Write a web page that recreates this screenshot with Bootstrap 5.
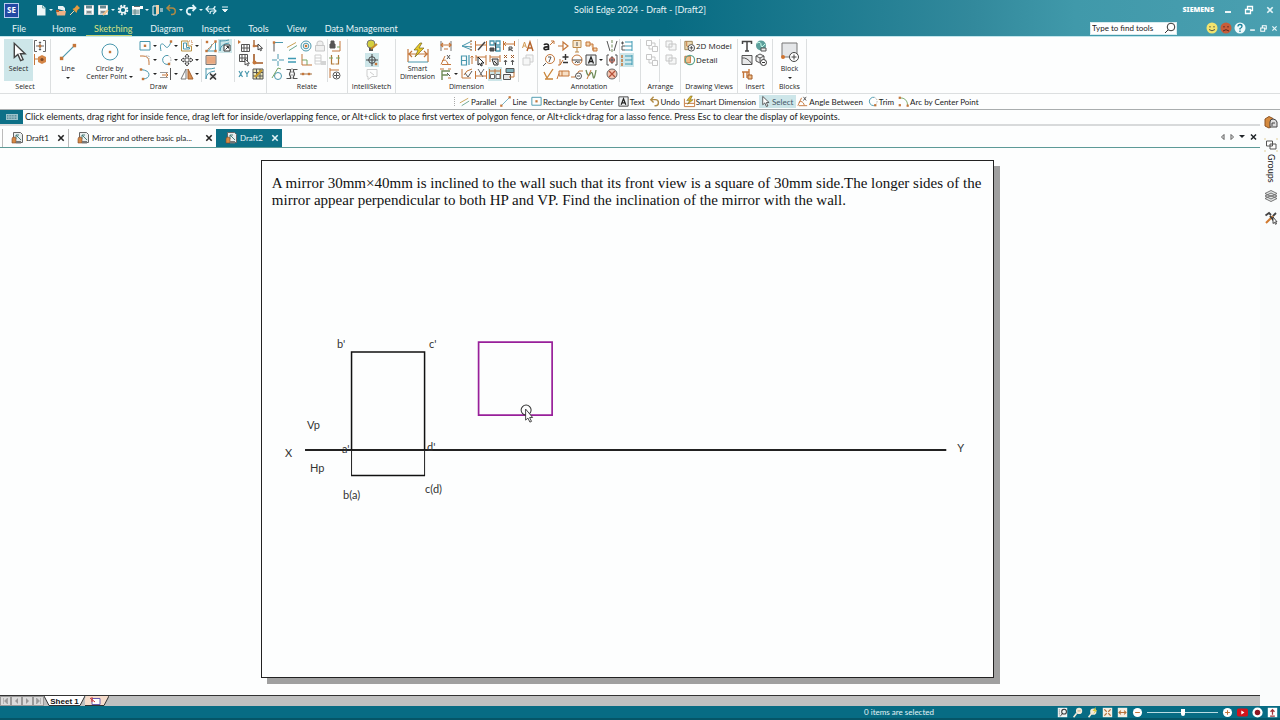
<!DOCTYPE html>
<html lang="en">
<head>
<meta charset="utf-8">
<meta name="viewport" content="width=device-width, initial-scale=1">
<title>Solid Edge 2024 - Draft - [Draft2]</title>
<link href="https://cdn.jsdelivr.net/npm/bootstrap@5.3.0/dist/css/bootstrap.min.css" rel="stylesheet">
<style>
:root{--teal:#076c84;--hi:#cde6e9;--rule:#dcdfe0}
body{font-family:Lato,"Noto Sans",sans-serif;font-size:9px;line-height:12px;color:#222;background:#fdfefe;overflow:hidden}
button{border:0;background:none;padding:0;color:inherit;font:inherit;line-height:inherit}
svg{display:block;flex:none}
.ic{width:14px;height:14px}
.defs{display:none}
.caret{width:0;height:0;border:2px solid transparent;border-top-color:currentColor;border-bottom:0;flex:none}
/* header */
.app-head{height:37px;background:linear-gradient(90deg,#076b82 0,#076b82 52%,#32899c 76%,#4099aa 84%,#4a9fb0 100%);color:#e4f4f7;border-bottom:1px solid #c2e6ec}
.title-row{height:20px;display:grid;grid-template-columns:1fr auto 1fr}
.se-logo{width:15px;height:15px;background:#2349a4;border:1px solid #b9cdf0;color:#fff;font:bold 8px/12px "Noto Sans",sans-serif}
.qat{padding-left:15px}
.qat button{display:flex;align-items:center;height:14px}
.qat .caret{margin:0 1px}
.winctl{padding-right:3px}
.winctl button{margin-left:7px}
.brand{font:900 7px/12px "Noto Sans",sans-serif;color:#fff}
.menu-row{height:16px}
.menu-row .nav{gap:18px;padding-left:12px}
.menu-row a{color:#e4f4f7;text-decoration:none;line-height:14px;padding-top:2px}
.menu-row a.on{color:#d9e284;box-shadow:inset 0 -1px #c3d072;margin-left:-8px;padding-left:8px}
.finder{width:87px;height:13px;background:#fff;border:1px solid #d9ebef}
.finder input{border:0;outline:0;width:72px;padding:0 1px;font-size:8px;height:11px;color:#222;background:none}
.finder input::placeholder{color:#222;opacity:1}
.helpers{padding-left:28px}
.helpers .doc .ic{width:11px;height:11px}
/* ribbon */
.ribbon{height:57px;padding-top:2px;border-bottom:1px solid var(--rule);font:7px/8px "Open Sans","Noto Sans",sans-serif;color:#222}
.rgroup{border-right:1px solid var(--rule);height:54px}
.rgroup>.body{height:43px}
.rgroup>.cap{line-height:10px;text-align:center;white-space:nowrap}
.tools{display:grid;grid-template-rows:repeat(3,14px);grid-auto-flow:column;grid-auto-columns:14px;align-content:start}
.tools.dd{grid-auto-columns:21px}
.tools.views{grid-auto-columns:auto;font-size:8px}
.tools.views .ic{width:13px}
.tools button{height:14px;display:flex;align-items:center;white-space:nowrap}
.tools .caret{margin-left:1px}
.hi{background:var(--hi)}
.dim{opacity:.4}
.vsep{width:1px;background:var(--rule);align-self:stretch}
.gap-s{width:2px}
.big{display:flex;flex-direction:column;align-items:center;height:42px}
.big .pic{height:26px;display:flex;align-items:center}
/* strips */
.quick{height:16px;font-size:8px;padding-left:454px;border-bottom:1px solid #a9adae}
.quick button{display:flex;align-items:center;height:13px;padding-right:3px;white-space:nowrap}
.quick .ic{width:13px;height:13px}
.quick .grip{width:4px;height:9px;border-left:1px dotted #aaa}
.quick .on{background:var(--hi);color:#456}
.prompt{height:16px;border-bottom:2px solid #d8dadb}
.prompt .kb{width:23px;height:14px;background:#0d7087}
.doc-tabs{height:22px;border-bottom:1px solid #5d9a97;font-size:8px;padding-left:2px}
.doc-tabs .dtab{height:18px;border-left:1px solid #bbb;padding-left:7px;color:#222}
.doc-tabs .dtab.on{background:#0d7087;color:#e4f4f7;border-color:#0d7087}
.dtab .fname{padding-left:2px;width:30px;white-space:nowrap}
.dtab .fname.wide{width:112px}
.tabnav .caret{margin:0 2px;border-width:3px 3px 0}
.tabnav .ic{width:13px}
.dock{width:20px;background:#fafcfc;padding:5px 0 0 4px}
.dock .grp{margin-top:9px}
.dock .vert{writing-mode:vertical-rl;line-height:14px;margin:2px 0 10px;height:25px}
.dock .ham{margin-top:8px}
/* sheet */
.sheet{width:58.2%;border:1px solid #222;box-shadow:6px 6px #a0a0a0;background:#fdfefe;margin:12px 0 0 -5px}
.sheet p{font:15px/17px "Liberation Serif",serif;color:#111;margin:0;padding:14px 0 0 10px;height:50px;white-space:nowrap}
.sheet svg{width:100%;height:auto}
.sheetbar{height:11px;background:#bfc0c0;border-top:1px solid #333}
.sheetbar .nv{width:11px;height:10px;border:1px solid #999;background:#dcdcdc;display:flex;align-items:center;justify-content:center}
.stab{position:relative;height:10px;font:bold 8px/9px "Liberation Sans",sans-serif;color:#111}
.stab svg{position:absolute;inset:0}
.stab span{position:relative}
.tab-sheet{width:41px}
.tab-bg{width:24px}
.status{height:14px;background:var(--teal);border-bottom:2px solid #055567;color:#e4f4f7;font-size:8px;gap:123px}
.status .ic{width:11px;height:11px}
.status .zoom-tools{gap:4px;padding-right:2px}
.zoomer{-webkit-appearance:none;appearance:none;width:71px;height:9px;margin:0;background:linear-gradient(#b9dce3,#b9dce3) center/100% 1px no-repeat}
.zoomer::-webkit-slider-thumb{-webkit-appearance:none;width:4px;height:7px;background:#fff;border-radius:0 0 2px 2px}
</style>
</head>
<body class="d-flex flex-column vh-100">
<svg class="defs" xmlns="http://www.w3.org/2000/svg"><defs>
<g id="pt"><rect x="-1.2" y="-1.2" width="2.4" height="2.4" fill="#c4763a"/></g>
<symbol id="i-caretw" viewBox="0 0 14 14"><path d="M4 4h6M4.500 6.500h5L7 9z" stroke="#e4f4f7" fill="#e4f4f7"/></symbol>
<symbol id="i-new" viewBox="0 0 14 14"><path d="M3 2h5.500l3 3v7.500H3z" fill="#eef6f7"/><path d="M8.500 2v3h3" fill="none" stroke="#7aa"/></symbol>
<symbol id="i-open" viewBox="0 0 14 14"><path d="M4 6V3h5l2 2v3" fill="#e9f2f4"/><path d="M2 8h10l-1 4.500H3z" fill="#f0b184"/><path d="M2 7h3v2H2z" fill="#b35c2a"/></symbol>
<symbol id="i-pin" viewBox="0 0 14 14"><path d="M2 12l4-4" stroke="#f0d8b0"/><path d="M4.500 6l4 4 1-3 2.500-2-3-3-2.500 3z" fill="#e59b3f"/></symbol>
<symbol id="i-save" viewBox="0 0 14 14"><path d="M2.500 2.500h9v9h-9z" fill="#fff" stroke="#ddd"/><path d="M4 2.500h6v3H4z" fill="#67878f"/><path d="M4 7.500h6v4H4z" fill="#b8c9cd"/><path d="M5 9h4" stroke="#555"/></symbol>
<symbol id="i-saveas" viewBox="0 0 14 14"><use href="#i-save"/><path d="M7 12l5-5" stroke="#f2c088" stroke-width="2"/></symbol>
<symbol id="i-gear" viewBox="0 0 14 14"><circle cx="7" cy="7" r="4.300" fill="none" stroke="#eef6f7" stroke-width="2" stroke-dasharray="2 1.370"/><circle cx="7" cy="7" r="2.800" fill="none" stroke="#eef6f7" stroke-width="1.500"/></symbol>
<symbol id="i-props" viewBox="0 0 14 14"><path d="M2 3h11v3H2z" fill="#fff"/><path d="M2 6h8v6H2z" fill="#d8e6e8"/><path d="M2.500 8h7M2.500 10h7M5 6v6" stroke="#688"/><path d="M4 3.500h6" stroke="#666"/></symbol>
<symbol id="i-exit" viewBox="0 0 14 14"><path d="M3 3h4v9H3z" fill="none" stroke="#fff"/><path d="M6 2h3v9H6z" fill="#f1cfa5"/><path d="M10 8h3M10 6h3" stroke="#fff"/></symbol>
<symbol id="i-undo" viewBox="0 0 14 14"><path d="M3 5h5a3 3 0 0 1 0 6.500H7M6 2L3 5l3 3" fill="none" stroke="#b08a45" stroke-width="1.500"/></symbol>
<symbol id="i-redo" viewBox="0 0 14 14"><path d="M11 5H6a3 3 0 0 0 0 6.500h1M8.500 2l3 3-3 3" fill="none" stroke="#dff3f8" stroke-width="1.800"/></symbol>
<symbol id="i-repeat" viewBox="0 0 14 14"><path d="M5 3L2 6l3 3M2 6h6q3 0 3-3M9 11l3-3-3-3M12 8H8q-2 0-2 3" fill="none" stroke="#dff3f8" stroke-width="1.200"/></symbol>
<symbol id="i-min" viewBox="0 0 14 14"><path d="M4 9h6" stroke="#fff" stroke-width="1.800"/></symbol>
<symbol id="i-rest" viewBox="0 0 14 14"><path d="M3.500 6.500h5v4h-5zM5.500 6V3.500h5v4H9" fill="none" stroke="#fff" stroke-width="1.300"/></symbol>
<symbol id="i-x" viewBox="0 0 14 14"><path d="M4.300 4.300l5.400 5.400M9.700 4.300L4.300 9.700" stroke="currentColor" stroke-width="1.600"/></symbol>
<symbol id="i-mag" viewBox="0 0 14 14"><circle cx="8" cy="6" r="3.800" fill="none" stroke="#333"/><path d="M5 9l-3 3" stroke="#333"/></symbol>
<symbol id="i-smile" viewBox="0 0 14 14"><circle cx="7" cy="7" r="5.500" fill="#f2e46d"/><path d="M5 5v1.500M9 5v1.500M4 8.500q3 2.600 6 0" fill="none" stroke="#554"/></symbol>
<symbol id="i-frown" viewBox="0 0 14 14"><circle cx="7" cy="7" r="5.500" fill="#c75d39"/><path d="M5 5v1.500M9 5v1.500M4 10q3-2.600 6 0" fill="none" stroke="#522"/></symbol>
<symbol id="i-help" viewBox="0 0 14 14"><circle cx="7" cy="7" r="5.500" fill="#eefafc"/><path d="M5 5.500q0-2 2-2t2 1.700Q9 6.500 7 7.500v1M7 9.500V11" fill="none" stroke="#17809a" stroke-width="1.300"/></symbol>
<symbol id="i-arrow" viewBox="0 0 14 14"><path d="M4 1.500v9l2.300-2 1.700 4 1.600-.7-1.700-3.700h3z" fill="#fff" stroke="#444" stroke-width=".9"/></symbol>
<symbol id="i-fit" viewBox="0 0 14 14"><path d="M4 1.500H1.500v11H4M10 1.500h2.500v11H10M7 3v8M3 7h8" fill="none" stroke="#666"/><path d="M5.500 4L7 2.200 8.500 4zM5.500 10L7 11.800 8.500 10z" fill="#555"/><circle cx="7" cy="7" r="1.500" fill="#c4763a"/></symbol>
<symbol id="i-tagbox" viewBox="0 0 14 14"><path d="M1.500 1v11M2 6h4" stroke="#c4763a" fill="none"/><path d="M5 4l4-2 4 2v5l-4 2-4-2z" fill="#d48647"/><circle cx="9" cy="6.500" r="1.600" fill="#7c4726"/></symbol>
<symbol id="i-line" viewBox="0 0 14 14"><path d="M2.500 11.500l9-9" stroke="#4a98ae" stroke-width=".8"/><use href="#pt" x="2.500" y="11.500"/><use href="#pt" x="11.500" y="2.500"/></symbol>
<symbol id="i-rect" viewBox="0 0 14 14"><path d="M2 2.500h10v8.500H2z" fill="none" stroke="#4a98ae"/><use href="#pt" x="7" y="6.800"/></symbol>
<symbol id="i-curve" viewBox="0 0 14 14"><path d="M2 12C0 3 4 4 6 7s4 1 6-4" fill="none" stroke="#4a98ae"/><use href="#pt" x="12" y="2.500"/></symbol>
<symbol id="i-offset" viewBox="0 0 14 14"><path d="M1.500 2v10h10V7H8V2z" fill="none" stroke="#b99140"/><path d="M3.500 4v6h6V8.500H6.500V4z" fill="none" stroke="#4a98ae"/><path d="M9 2h3v4" fill="none" stroke="#c4763a" stroke-dasharray="1"/></symbol>
<symbol id="i-fillet" viewBox="0 0 14 14"><path d="M2 3h3q6 0 6 6v3" fill="none" stroke="#c4763a"/><path d="M8 3h3v3" fill="none" stroke="#aaa" stroke-dasharray="1.500 1"/></symbol>
<symbol id="i-trim" viewBox="0 0 14 14"><path d="M9 2.500a4.500 4.500 0 1 0 1 8.500" fill="none" stroke="#4a98ae"/><path d="M9 2.500a4.500 4.500 0 0 1 2 7" fill="none" stroke="#aaa" stroke-dasharray="1.500 1"/><use href="#pt" x="10" y="11"/></symbol>
<symbol id="i-move" viewBox="0 0 14 14"><path d="M7 1l2 2.500H8V6h2.500V5L13 7l-2.500 2V8H8v2.500h1L7 13l-2-2.500h1V8H3.500v1L1 7l2.500-2v1H6V3.500H5z" fill="#fff" stroke="#444"/></symbol>
<symbol id="i-arc" viewBox="0 0 14 14"><path d="M3 2.500q8 1 8 5T5 12" fill="none" stroke="#4a98ae"/><use href="#pt" x="3" y="2.500"/><use href="#pt" x="5" y="12"/></symbol>
<symbol id="i-arcc" viewBox="0 0 14 14"><path d="M3 3q8 0 8.500 8" fill="none" stroke="#79aa6b"/><use href="#pt" x="3" y="3"/><use href="#pt" x="11.500" y="11.500"/><use href="#pt" x="3" y="11"/></symbol>
<symbol id="i-extend" viewBox="0 0 14 14"><path d="M1 5.500h8M1 10.500h8" stroke="#999"/><path d="M3 8h6M7 6l2 2-2 2" fill="none" stroke="#c4763a"/><path d="M11.500 1v12" stroke="#555"/></symbol>
<symbol id="i-mirror" viewBox="0 0 14 14"><path d="M6 2v10H1z" fill="#fff" stroke="#777"/><path d="M8 2v10h5z" fill="#d99155" stroke="#a4602e"/></symbol>
<symbol id="i-sketch" viewBox="0 0 14 14"><path d="M11.500 2v10H2q5-1 6-7" fill="none" stroke="#4a98ae"/><path d="M2 12l9-9" stroke="#c4763a" stroke-dasharray="2 1"/><use href="#pt" x="3" y="3"/><use href="#pt" x="11.500" y="2.500"/><use href="#pt" x="2.500" y="12"/><use href="#pt" x="11.500" y="12"/></symbol>
<symbol id="i-hatch" viewBox="0 0 14 14"><path d="M2 2.500h10v9H2z" fill="#f0c9ae" stroke="#777"/><path d="M4 3v8M6 3v8M8 3v8M10 3v8M2.500 5h9M2.500 7h9M2.500 9h9" stroke="#e08a55" stroke-width=".6"/></symbol>
<symbol id="i-cfg" viewBox="0 0 14 14"><path d="M2 1v11M2 2q6 0 9-1M2 12Q2 5 11 4" fill="none" stroke="#4a98ae"/><path d="M6 6h6v6H6z" fill="#fff" stroke="#333"/><path d="M7.500 10.500l3-3M8.500 7.500h2v2" fill="none" stroke="#333"/></symbol>
<symbol id="i-cfgx" viewBox="0 0 14 14"><path d="M2 1v11M2 2q6 0 9-1M2 12Q2 5 11 4" fill="none" stroke="#4a98ae"/><path d="M6 7h6v5H6z" fill="#ddd"/><path d="M6 6.500l6 6M12 6.500l-6 6" stroke="#333" stroke-width="1.500"/></symbol>
<symbol id="i-grid1" viewBox="0 0 14 14"><path d="M4.500 5.500h8v7h-8zM7 5.500v7M10 5.500v7M4.500 9h8" fill="none" stroke="#555"/><path d="M1 1l3 2-3 2z" fill="#c4763a"/></symbol>
<symbol id="i-grid2" viewBox="0 0 14 14"><path d="M2.500 1.500h8v7h-8zM5 1.500v7M8 1.500v7M2.500 5h8" fill="none" stroke="#555"/><path d="M8 6v6l1.500-1.200 1 2 1-.5-1-2h2z" fill="#fff" stroke="#333" stroke-width=".8"/></symbol>
<symbol id="i-xy" viewBox="0 0 14 14"><path d="M2 4l3.500 6M5.500 4L2 10M8 4l2 3 2-3M10 7v3" fill="none" stroke="#4a98ae" stroke-width="1.200"/></symbol>
<symbol id="i-snap" viewBox="0 0 14 14"><path d="M3 1v6h6" fill="none" stroke="#a35a26" stroke-width="1.300"/><use href="#pt" x="3" y="7"/><path d="M7 5v6l1.500-1.200 1 2 1-.5-1-2h2z" fill="#fff" stroke="#333" stroke-width=".9"/></symbol>
<symbol id="i-angle" viewBox="0 0 14 14"><path d="M3 1v9h9" fill="none" stroke="#a35a26" stroke-width="1.600"/><circle cx="3.500" cy="9.500" r="2" fill="#c4763a"/></symbol>
<symbol id="i-gridp" viewBox="0 0 14 14"><path d="M2 2h10v10H2zM2 5.500h10M2 9h10M5.500 2v10M9 2v10" fill="#e8e6bb" stroke="#555"/><path d="M4 10l7-7" stroke="#c79a28" stroke-width="2"/></symbol>
<symbol id="i-con" viewBox="0 0 14 14"><path d="M2 3.500h10" stroke="#4a98ae"/><path d="M3 3.500v9" stroke="#555"/><use href="#pt" x="3" y="3.500"/></symbol>
<symbol id="i-par" viewBox="0 0 14 14"><path d="M2 8.500l9-5" stroke="#c9a053"/><path d="M4 11.500l8-5" stroke="#6aa58e"/></symbol>
<symbol id="i-conc" viewBox="0 0 14 14"><circle cx="7" cy="7" r="5" fill="none" stroke="#4a98ae"/><circle cx="7" cy="7" r="2.800" fill="none" stroke="#4a98ae"/><use href="#pt" x="7" y="7"/></symbol>
<symbol id="i-lock" viewBox="0 0 14 14"><path d="M2.500 6.500h9v5.500h-9zM4 6V4q0-2 3-2t3 2v2" fill="#ddd" stroke="#777"/></symbol>
<symbol id="i-plus" viewBox="0 0 14 14"><path d="M7 1v5M7 8v5M1 7h5M8 7h5" stroke="#4a98ae"/></symbol>
<symbol id="i-eq" viewBox="0 0 14 14"><path d="M3 5.500h8M3 9h8" stroke="#3f9ab4" stroke-width="1.600"/></symbol>
<symbol id="i-perp" viewBox="0 0 14 14"><path d="M3 1v11h10" fill="none" stroke="#c4763a"/><path d="M3 7h5v5" fill="none" stroke="#79a565"/></symbol>
<symbol id="i-rig" viewBox="0 0 14 14"><path d="M2 2h6v9H2zM2 5h6M2 8h6" fill="none" stroke="#888"/><path d="M8 8h5v4H8z" fill="#999"/></symbol>
<symbol id="i-tan" viewBox="0 0 14 14"><circle cx="7" cy="9" r="3.500" fill="none" stroke="#4a98ae"/><path d="M1 11L7 1l3 1" fill="none" stroke="#79a565"/></symbol>
<symbol id="i-sym" viewBox="0 0 14 14"><path d="M1.500 2.500h4v2q-2 2.500 0 5v2h-4M12.500 2.500h-4v2q2 2.500 0 5v2h4" fill="none" stroke="#555" stroke-width="1.200"/><path d="M7 1v12" stroke="#999" stroke-dasharray="2 1"/></symbol>
<symbol id="i-col" viewBox="0 0 14 14"><path d="M1 7h12" stroke="#a37246"/><use href="#pt" x="4" y="7"/><use href="#pt" x="10" y="7"/></symbol>
<symbol id="i-rel1" viewBox="0 0 14 14"><path d="M2 5h5v4H2zM3 5V2h3v3" fill="#555" stroke="#555"/><path d="M12 2v10H4" fill="none" stroke="#c4763a"/><path d="M9 8h3" stroke="#79a565"/></symbol>
<symbol id="i-rel2" viewBox="0 0 14 14"><path d="M3.500 2v9h3M10.500 2v9h-3" fill="none" stroke="#b27a3a" stroke-width="1.200"/><path d="M1 5h4M8 5h4" stroke="#79a565"/></symbol>
<symbol id="i-rel3" viewBox="0 0 14 14"><path d="M2 1v10M2 3h9" fill="none" stroke="#c4763a"/><circle cx="8.500" cy="8.500" r="3.500" fill="#fff" stroke="#555"/><path d="M8.500 6v5M6 8.500h5" stroke="#555"/></symbol>
<symbol id="i-intel" viewBox="0 0 14 14"><circle cx="6" cy="5" r="4" fill="#d3cf3e" stroke="#777"/><path d="M4 9h4v3H4z" fill="#555"/><path d="M6 10l6-5" stroke="#c58b2a" stroke-width="2"/></symbol>
<symbol id="i-cross" viewBox="0 0 14 14"><circle cx="7" cy="7" r="3.300" fill="none" stroke="#444"/><path d="M7 1v12M1 7h12" stroke="#444"/><use href="#pt" x="11" y="11"/></symbol>
<symbol id="i-pinbox" viewBox="0 0 14 14"><path d="M2 2.500h10v7H7l-4 3V9.500H2zM5 5l4 3" fill="none" stroke="#888"/></symbol>
<symbol id="i-dim" viewBox="0 0 14 14"><path d="M2 2v10M12 2v10" stroke="#777"/><path d="M2 6h10M4 4L2 6l2 2M10 4l2 2-2 2M5 10h4" fill="none" stroke="#c4763a" stroke-width="1.200"/></symbol>
<symbol id="i-sdim" viewBox="0 0 14 14"><path d="M1.500 4v8.500h11V4M2 9h10" fill="none" stroke="#c4763a"/><path d="M8 1L4 6h3l-2 4 6-5H8l2-4z" fill="#d8b329" stroke="#665515" stroke-width=".5"/></symbol>
<symbol id="i-angd" viewBox="0 0 14 14"><path d="M2 11.500L6 3M3 11.500h9M3 8q4-3 6 3" fill="none" stroke="#c4763a"/><path d="M8 2l3 4M11 2L8 6" stroke="#555"/></symbol>
<symbol id="i-coord" viewBox="0 0 14 14"><path d="M3 13V4h8M3 8h6" fill="none" stroke="#6f8b57" stroke-width="1.400"/><path d="M1 2h4M9 2h3M9 11h3" stroke="#c4763a"/><path d="M8 6l3 3" stroke="#555"/></symbol>
<symbol id="i-chain" viewBox="0 0 14 14"><path d="M12 2L2 7l10 1M2 7l10 4" fill="none" stroke="#4a98ae"/><path d="M11 1v11" stroke="#c4763a" stroke-dasharray="2 1"/></symbol>
<symbol id="i-tbl" viewBox="0 0 14 14"><path d="M1.500 3h5v9h-5zM1.500 7.500h5M9 2v10" fill="none" stroke="#4a98ae" stroke-width="1.200"/><path d="M12 3v8M10.500 4.500L12 3l1.500 1.500" stroke="#c4763a" fill="none"/></symbol>
<symbol id="i-chk" viewBox="0 0 14 14"><path d="M2 2v9h9M4 8l3-4 5-2" fill="none" stroke="#c4763a"/><path d="M5 6l3 4 4-6" fill="none" stroke="#555"/></symbol>
<symbol id="i-dedit" viewBox="0 0 14 14"><path d="M1.500 2v10M12.500 2v10M2 6h10" stroke="#c4763a" fill="none"/><path d="M4 11l7-8" stroke="#444" stroke-width="1.500"/></symbol>
<symbol id="i-dbrk" viewBox="0 0 14 14"><path d="M1.500 4v8M12.500 4v8M2 9h10" stroke="#c4763a" fill="none"/><path d="M4 2l5 8M10 2L6 8" stroke="#666"/></symbol>
<symbol id="i-dref" viewBox="0 0 14 14"><path d="M1.500 2v9M12.500 2v5M2 5h10M4 3L2 5l2 2" stroke="#c4763a" fill="none"/><path d="M7 12V8h3v2H7l4 2" stroke="#444" fill="none"/></symbol>
<symbol id="i-dcur" viewBox="0 0 14 14"><path d="M2 2v6M12 2v10M2 4h10" stroke="#c4763a" fill="none"/><path d="M4 4v8l2-1.500 1 2.500 1.300-.6L7.300 10H10z" fill="#fff" stroke="#222"/></symbol>
<symbol id="i-dmv" viewBox="0 0 14 14"><path d="M2 2v7M12 2v7M2 4h10" stroke="#c4763a" fill="none"/><path d="M4 6h6v6H6zM6 8l3 3" fill="#ddd" stroke="#333"/></symbol>
<symbol id="i-dqr" viewBox="0 0 14 14"><path d="M2 2h4v4H2zM8 2h4v4H8zM8 8h4v4H8z" fill="none" stroke="#4a98ae" stroke-width="1.300"/><path d="M2 9h4v3H2zM6.500 4h1v8" fill="#555" stroke="#444"/></symbol>
<symbol id="i-xx" viewBox="0 0 14 14"><path d="M2 2l3 3M5 2L2 5M9 2l3 3M12 2L9 5" stroke="#a35a26"/><path d="M3.500 7v5M10.500 7v5M2 9l1.500-2L5 9M9 9l1.500-2L12 9" fill="none" stroke="#555"/></symbol>
<symbol id="i-dlay" viewBox="0 0 14 14"><path d="M1.500 2v10M12.500 2v10M7 2v5M2 4h10" fill="none" stroke="#c4763a"/><path d="M2.500 7.500h4v4h-4zM8 7.500h4v4H8z" fill="#fff" stroke="#666"/></symbol>
<symbol id="i-dst" viewBox="0 0 14 14"><path d="M4 1.500h8v4H4z" fill="#7fb3bd" stroke="#555"/><path d="M1.500 7.500h7v5h-7z" fill="#e7e7e7" stroke="#555"/><path d="M7 10h5V5" fill="none" stroke="#c4763a"/></symbol>
<symbol id="i-aa" viewBox="0 0 14 14"><path d="M1.500 9l2-6 2 6M2.200 7h2.600" fill="none" stroke="#d29a54"/><path d="M6 12l3-9 3 9M7 9h4" fill="none" stroke="#b4642c" stroke-width="1.400"/></symbol>
<symbol id="i-box" viewBox="0 0 14 14"><path d="M2 5h7v7H2zM5 5V2h7v7H9" fill="#eee" stroke="#888"/></symbol>
<symbol id="i-leada" viewBox="0 0 14 14"><path d="M6.500 11V7q0-2-2-2t-2.500 1M6.500 8Q2 7.500 2 9.500T6.500 10" fill="none" stroke="#222" stroke-width="1.600"/><path d="M8 6l4-4M9 2h3v3" fill="none" stroke="#c4763a"/></symbol>
<symbol id="i-flag" viewBox="0 0 14 14"><path d="M2 7h5M7 3l5 4-5 4z" fill="none" stroke="#c4763a" stroke-width="1.200"/></symbol>
<symbol id="i-datum" viewBox="0 0 14 14"><path d="M3 1.500h8v7H3zM7 9v4M5 13h4" fill="#f7e8d0" stroke="#bc8a4a"/><path d="M7 3v4" stroke="#555"/></symbol>
<symbol id="i-step" viewBox="0 0 14 14"><path d="M2 3h4v4H2zM6 5h3v6M9 9h4v3H9z" fill="#f5d5ae" stroke="#c4763a"/></symbol>
<symbol id="i-ball" viewBox="0 0 14 14"><circle cx="8" cy="6" r="4.500" fill="none" stroke="#c4763a"/><path d="M6 4h3l-2 5M4 10l-3 3" fill="none" stroke="#555"/></symbol>
<symbol id="i-pm" viewBox="0 0 14 14"><path d="M2 12h2V6M4 12l3-5" fill="none" stroke="#c4763a"/><path d="M9.500 1v6M6.500 4h6M7 9.500h5" stroke="#333" stroke-width="1.400"/></symbol>
<symbol id="i-dtgt" viewBox="0 0 14 14"><circle cx="7" cy="7" r="5" fill="none" stroke="#c4763a"/><path d="M2 7h10M5 10l1.500-2L8 10M9 8v2" fill="none" stroke="#444"/></symbol>
<symbol id="i-textbox" viewBox="0 0 14 14"><path d="M2 2h10v10H2z" fill="#eef1f2" stroke="#444"/><path d="M4.500 10.500L7 4l2.500 6.500M5.300 8.500h3.400" fill="none" stroke="#222" stroke-width="1.300"/></symbol>
<symbol id="i-surf" viewBox="0 0 14 14"><path d="M2 5l3 6 6-9M3 12h8" fill="none" stroke="#c98539" stroke-width="1.300"/></symbol>
<symbol id="i-fcf" viewBox="0 0 14 14"><path d="M3 4h10v5H3zM6 4v5M3 6.500L1 12" fill="#f7e0c7" stroke="#c4763a"/></symbol>
<symbol id="i-edge" viewBox="0 0 14 14"><path d="M1 10h4l4-6h4" fill="none" stroke="#c4763a"/><circle cx="8.500" cy="9" r="3" fill="#fff" stroke="#555"/><path d="M7 9h3" stroke="#555"/></symbol>
<symbol id="i-wave" viewBox="0 0 14 14"><path d="M2 3q2 8 4 4t3 2 3-6" fill="none" stroke="#6f8b57" stroke-width="1.300"/><path d="M3 12L7 3" stroke="#c4763a"/></symbol>
<symbol id="i-cl" viewBox="0 0 14 14"><path d="M2 2l3 10M12 2L9 12" stroke="#555"/><path d="M7 1v12" stroke="#6f8b57" stroke-dasharray="3 1.500"/></symbol>
<symbol id="i-cm" viewBox="0 0 14 14"><path d="M4 2H2v10h2M10 2h2v10h-2" fill="none" stroke="#555"/><circle cx="7" cy="7" r="2.500" fill="#eaa" stroke="#b5523a"/><path d="M7 3v8M4 7h6" stroke="#555"/></symbol>
<symbol id="i-bolt" viewBox="0 0 14 14"><circle cx="7" cy="7" r="5" fill="#f3c7b3" stroke="#666"/><path d="M4 4l6 6M10 4l-6 6" stroke="#b5523a" stroke-width="1.300"/></symbol>
<symbol id="i-list" viewBox="0 0 14 14"><path d="M5 3h7M5 7h7M5 11h7M12 2v10" stroke="#3f9ab4"/><path d="M1 4h3M2.500 2.500v3M5 7H2v4h3" fill="none" stroke="#555"/></symbol>
<symbol id="i-listh" viewBox="0 0 14 14"><path d="M5 3h7M5 7h7M5 11h7M12 2v10" stroke="#3f9ab4"/><path d="M2 2v3M2 6v3M2 10v3" stroke="#c4763a" stroke-width="1.500"/></symbol>
<symbol id="i-arr1" viewBox="0 0 14 14"><path d="M1.500 1.500h5v5h-5zM7.500 7.500h5v5h-5zM4 7v3h3M7 4h3v3" fill="none" stroke="#777"/></symbol>
<symbol id="i-arr2" viewBox="0 0 14 14"><path d="M2 2h6v6H2zM5 5h7v6H5z" fill="#eee" stroke="#777"/></symbol>
<symbol id="i-model" viewBox="0 0 14 14"><path d="M2 2h8v9H2z" fill="#ead9b2" stroke="#9a8250"/><path d="M4 2v5l4 2" fill="none" stroke="#c4763a"/><circle cx="9" cy="9" r="3.500" fill="#fff" stroke="#444"/><path d="M9 7v4M7 9h4" stroke="#444"/></symbol>
<symbol id="i-detail" viewBox="0 0 14 14"><path d="M2 3h6v7H2z" fill="#f1bf89" stroke="#c4763a"/><circle cx="7.500" cy="7" r="5" fill="none" stroke="#5fa48e" stroke-width="1.300"/></symbol>
<symbol id="i-T" viewBox="0 0 14 14"><path d="M2.500 5V2.500h9V5M7 3v9M5 12h4" fill="none" stroke="#444" stroke-width="1.500"/></symbol>
<symbol id="i-globe" viewBox="0 0 14 14"><circle cx="7" cy="6.500" r="5" fill="#5c9f9b"/><path d="M3 4q4-2 4 2t4-1" fill="none" stroke="#cfe" /><path d="M7 9h5v3H7z" fill="#eee" stroke="#555"/></symbol>
<symbol id="i-img" viewBox="0 0 14 14"><path d="M2 2.500h10v9H2z" fill="#e8e8e8" stroke="#555"/><path d="M2 5q5-1 10 6" fill="none" stroke="#555"/></symbol>
<symbol id="i-obj" viewBox="0 0 14 14"><path d="M2 3l4-2 4 2v5l-4 2-4-2zM2 3l4 2 4-2M6 5v4" fill="#eee" stroke="#555"/><circle cx="9.500" cy="9.500" r="3" fill="#fff" stroke="#333"/><path d="M8 9.500h3" stroke="#333"/></symbol>
<symbol id="i-hand" viewBox="0 0 14 14"><path d="M2 5h7M3.500 5v6M7 5v6M9 2v9" fill="none" stroke="#c4763a" stroke-width="1.400"/><path d="M8 8h4v4H8z" fill="#f1bf89" stroke="#a35a26"/></symbol>
<symbol id="i-doc" viewBox="0 0 14 14"><path d="M3.500 1.500h7l2 2v8h-9z" fill="#e9eeee" stroke="#666"/><path d="M6 4l5 5M6 8V4h3" fill="none" stroke="#4b7f7a"/><path d="M2 8q0-2 2-2t2 2v4H2z" fill="#d78a46" stroke="#7c4726" stroke-width=".6"/><path d="M6 10h5v2.500H6z" fill="#777"/></symbol>
<symbol id="i-lib" viewBox="0 0 14 14"><path d="M1 4l4-2.500 4 2v7L5 13l-4-2z" fill="#d48a3e" stroke="#8c5322"/><path d="M6 7q0-3 3-3t4 3v5H6z" fill="#ddd" stroke="#444"/><path d="M8 11V8h3" fill="none" stroke="#444"/></symbol>
<symbol id="i-groups" viewBox="0 0 14 14"><path d="M2.500 3h6v5h-6zM6 6h6v5H6z" fill="#fff" stroke="#555"/><path d="M.5 1h1M12.500 1h1M.5 13h1M12.500 13h1" stroke="#c4a33a"/></symbol>
<symbol id="i-layers" viewBox="0 0 14 14"><path d="M1 9.500L7 12.500l6-3-6-3zM1 7l6 3 6-3-6-3zM1 4.500l6 3 6-3-6-3z" fill="#e3e6e6" stroke="#666" stroke-width=".9"/></symbol>
<symbol id="i-hammer" viewBox="0 0 14 14"><path d="M2 12l7-7" stroke="#d07a2f" stroke-width="2"/><path d="M1.500 4.500L5 2l2 2M9 5l3-3M6 5l4 5" fill="none" stroke="#444" stroke-width="1.800"/><path d="M9 6v6.500l1.500-1.200 1 2 1-.5-1-2H13z" fill="#fff" stroke="#222" stroke-width=".8"/></symbol>
<symbol id="z-area" viewBox="0 0 14 14"><path d="M1 1h12v12H1z" fill="#f0f3f3"/><path d="M3 3v8" stroke="#777" stroke-dasharray="1.500 1"/><circle cx="9" cy="6" r="3" fill="none" stroke="#333" stroke-width="1.300"/><path d="M7 8l-3 4" stroke="#333"/></symbol>
<symbol id="z-mag" viewBox="0 0 14 14"><circle cx="9" cy="5" r="4" fill="#f1ead9"/><path d="M6 8l-4 5" stroke="#f1ead9" stroke-width="2"/><path d="M7 5h4" stroke="#b96"/></symbol>
<symbol id="z-bolt" viewBox="0 0 14 14"><circle cx="8" cy="6" r="4" fill="#f1ead9"/><path d="M6 8l-4 5" stroke="#f1ead9" stroke-width="2"/><path d="M11 0L7 5h3l-2 4 5-5h-2z" fill="#d8c93a"/></symbol>
<symbol id="z-fit" viewBox="0 0 14 14"><path d="M1 1h12v12H1z" fill="#f6efe4"/><path d="M3 3l3 3M11 3L8 6M3 11l3-3M11 11L8 8" stroke="#b5703a" stroke-width="1.500"/></symbol>
<symbol id="z-wid" viewBox="0 0 14 14"><path d="M1 1h12v12H1z" fill="#f6efe4"/><path d="M3 7h8M5 4.500L2.500 7 5 9.500M9 4.500L11.500 7 9 9.500" fill="none" stroke="#b5703a" stroke-width="1.300"/></symbol>
<symbol id="z-minus" viewBox="0 0 14 14"><circle cx="7" cy="7" r="5.800" fill="#fff"/><path d="M4 7h6" stroke="#c4763a" stroke-width="1.300"/></symbol>
<symbol id="z-plus" viewBox="0 0 14 14"><circle cx="7" cy="7" r="5.800" fill="#fff"/><path d="M4 7h6M7 4v6" stroke="#c4763a" stroke-width="1.300"/></symbol>
<symbol id="z-yt" viewBox="0 0 14 14"><rect y="2" width="14" height="10" rx="2" fill="#d4141c"/><path d="M5.500 4.500v5l4-2.500z" fill="#fff"/></symbol>
<symbol id="z-rec" viewBox="0 0 14 14"><circle cx="7" cy="7" r="6.500" fill="#fff"/><circle cx="7" cy="7" r="3.500" fill="#8f1622"/></symbol>
<symbol id="z-up" viewBox="0 0 14 14"><rect x="1" y="1" width="12" height="12" fill="#fff"/><path d="M7 10V4M4.500 6L7 3.500 9.500 6M4 11.500h6" fill="none" stroke="#a1343a" stroke-width="1.600"/></symbol>
</defs></svg>

<header class="app-head">
  <div class="title-row align-items-center">
    <div class="d-flex align-items-center ps-1">
      <div class="se-logo text-center">SE</div>
      <div class="qat d-flex align-items-center" id="qat"></div>
    </div>
    <div>Solid Edge 2024 - Draft - [Draft2]</div>
    <div class="d-flex align-items-center justify-content-end winctl">
      <strong class="brand">SIEMENS</strong>
      <button aria-label="Minimize"><svg class="ic"><use href="#i-min"/></svg></button>
      <button aria-label="Restore"><svg class="ic"><use href="#i-rest"/></svg></button>
      <button aria-label="Close"><svg class="ic"><use href="#i-x"/></svg></button>
    </div>
  </div>
  <div class="menu-row d-flex align-items-center justify-content-between">
    <nav class="nav flex-nowrap">
      <a href="#" class="me-2">File</a><a href="#">Home</a><a href="#" class="on">Sketching</a><a href="#">Diagram</a><a href="#">Inspect</a><a href="#">Tools</a><a href="#">View</a><a href="#">Data Management</a>
    </nav>
    <div class="d-flex align-items-center">
      <div class="finder d-flex align-items-center"><input type="text" placeholder="Type to find tools" aria-label="Type to find tools"><svg class="ic"><use href="#i-mag"/></svg></div>
      <div class="d-flex align-items-center helpers">
        <button aria-label="Like"><svg class="ic"><use href="#i-smile"/></svg></button><button aria-label="Dislike"><svg class="ic"><use href="#i-frown"/></svg></button><button aria-label="Help"><svg class="ic"><use href="#i-help"/></svg></button>
        <button class="doc" aria-label="Minimize document"><svg class="ic"><use href="#i-min"/></svg></button><button class="doc" aria-label="Restore document"><svg class="ic"><use href="#i-rest"/></svg></button><button class="doc" aria-label="Close document"><svg class="ic"><use href="#i-x"/></svg></button>
      </div>
    </div>
  </div>
</header>

<div class="ribbon d-flex" id="ribbon"></div>

<div class="d-flex flex-column flex-grow-1 overflow-hidden">
  <div class="quick d-flex align-items-center" id="quick"></div>
  <div class="d-flex flex-grow-1 overflow-hidden">
    <main class="flex-grow-1 d-flex flex-column overflow-hidden">
      <div class="prompt d-flex align-items-center">
        <div class="kb d-flex align-items-center justify-content-center"><svg width="12" height="6" viewBox="0 0 12 6"><path d="M0 0h12v6H0z" fill="#9cc3cb"/><path d="M1 1.500h10M1 3h10M1 4.500h10" stroke="#4a7f8b" stroke-dasharray="1 .6" stroke-width=".8"/></svg></div>
        <div class="gap-s"></div>
        <div class="text-nowrap">Click elements, drag right for inside fence, drag left for inside/overlapping fence, or Alt+click to place first vertex of polygon fence, or Alt+click+drag for a lasso fence. Press Esc to clear the display of keypoints.</div>
      </div>
      <div class="doc-tabs d-flex align-items-end justify-content-between">
        <div class="d-flex">
          <div class="dtab d-flex align-items-center"><svg class="ic"><use href="#i-doc"/></svg><span class="fname">Draft1</span><button aria-label="Close Draft1"><svg class="ic"><use href="#i-x"/></svg></button></div>
          <div class="dtab d-flex align-items-center"><svg class="ic"><use href="#i-doc"/></svg><span class="fname wide">Mirror and othere basic pla...</span><button aria-label="Close Mirror"><svg class="ic"><use href="#i-x"/></svg></button></div>
          <div class="dtab on d-flex align-items-center"><svg class="ic"><use href="#i-doc"/></svg><span class="fname">Draft2</span><button aria-label="Close Draft2"><svg class="ic"><use href="#i-x"/></svg></button></div>
        </div>
        <div class="tabnav d-flex align-items-center h-100 text-dark">
          <svg width="17" height="8" viewBox="0 0 17 8"><path d="M4 1.500L1.500 4 4 6.500zM11 1.500L13.500 4 11 6.500z" fill="none" stroke="#555"/></svg>
          <span class="caret"></span><button aria-label="Close"><svg class="ic"><use href="#i-x"/></svg></button>
        </div>
      </div>
      <div class="flex-grow-1 d-flex justify-content-center align-items-start overflow-hidden">
        <div class="sheet">
          <p>A mirror 30mm×40mm is inclined to the wall such that its front view is a square of 30mm side.The longer sides of the<br>mirror appear perpendicular to both HP and VP. Find the inclination of the mirror with the wall.</p>
          <svg viewBox="262 211 731 466" font-family="Lato, sans-serif" font-size="11" fill="#333">
            <path d="M305 450H946" stroke="#222" stroke-width="2"/>
            <path d="M351.500 450V352H424.500V450" fill="none" stroke="#111" stroke-width="1.500"/>
            <path d="M351.500 450V475M424.500 450V475" stroke="#222"/><path d="M351 475.300H425" stroke="#111" stroke-width="1.500"/>
            <path d="M478.500 342H552V415H478.500z" fill="none" stroke="#98209a" stroke-width="1.700"/>
            <text x="337" y="348">b'</text><text x="429" y="348">c'</text><text x="307" y="429">Vp</text><text x="285" y="457">X</text><text x="342" y="453">a'</text><text x="427" y="451">d'</text><text x="310" y="472">Hp</text><text x="343" y="499">b(a)</text><text x="425" y="493">c(d)</text><text x="957" y="452">Y</text>
            <circle cx="526" cy="410" r="5" fill="none" stroke="#333"/><path d="M525.500 409v11l2.300-2 2 4 1.600-.7-1.900-3.900h3z" fill="#fff" stroke="#333" stroke-width=".9"/>
          </svg>
        </div>
      </div>
      <div class="sheetbar d-flex">
        <button class="nv" aria-label="First sheet"><svg width="7" height="6" viewBox="0 0 7 6"><path d="M1.500 0v6M5.500 0v6L2.500 3z" fill="#999" stroke="#999" stroke-width=".6"/></svg></button><button class="nv" aria-label="Previous sheet"><svg width="7" height="6" viewBox="0 0 7 6"><path d="M5 0v6L2 3z" fill="#999"/></svg></button><button class="nv" aria-label="Next sheet"><svg width="7" height="6" viewBox="0 0 7 6"><path d="M2 0v6l3-3z" fill="#999"/></svg></button><button class="nv" aria-label="Last sheet"><svg width="7" height="6" viewBox="0 0 7 6"><path d="M5.500 0v6M1.500 0v6l3-3z" fill="#999" stroke="#999" stroke-width=".6"/></svg></button>
        <button class="stab tab-sheet"><svg width="41" height="10" viewBox="0 0 41 10"><path d="M0 0h41l-5 9.500H5z" fill="#fff"/><path d="M0 0l5 9.500h31L41 0" fill="none" stroke="#333"/></svg><span>Sheet 1</span></button>
        <button class="stab tab-bg" aria-label="Background sheet"><svg width="24" height="10" viewBox="0 0 24 10"><path d="M1 0h23l-5 9.500H-3z" fill="#f5dccb"/><path d="M-3 9.500h22L24 0" fill="none" stroke="#333"/><path d="M7 2.500h8v6H7z" fill="#fff" stroke="#6a5cae"/><path d="M5 2l5 4M7 1v5" stroke="#c33"/></svg></button>
      </div>
    </main>
    <aside class="dock">
      <svg class="ic"><use href="#i-lib"/></svg>
      <svg class="ic grp"><use href="#i-groups"/></svg>
      <div class="vert">Groups</div>
      <svg class="ic"><use href="#i-layers"/></svg>
      <svg class="ic ham"><use href="#i-hammer"/></svg>
    </aside>
  </div>
</div>
<footer class="status d-flex align-items-center justify-content-end">
  <span>0 items are selected</span>
  <div class="zoom-tools d-flex align-items-center">
    <svg class="ic"><use href="#z-area"/></svg><svg class="ic"><use href="#z-mag"/></svg><svg class="ic"><use href="#z-bolt"/></svg><svg class="ic"><use href="#z-fit"/></svg><svg class="ic"><use href="#z-wid"/></svg><svg class="ic"><use href="#z-minus"/></svg>
    <input type="range" class="zoomer" aria-label="Zoom" value="50">
    <svg class="ic"><use href="#z-plus"/></svg><svg class="ic"><use href="#z-yt"/></svg><svg class="ic"><use href="#z-rec"/></svg><svg class="ic"><use href="#z-up"/></svg>
  </div>
</footer>
<script src="https://cdn.jsdelivr.net/npm/bootstrap@5.3.0/dist/js/bootstrap.bundle.min.js"></script>
<script>
// "name" = icon, "name!" = highlighted, "name-" = disabled, "name+" = with drop-down caret
const icon = n => `<svg class="ic"><use href="#i-${n}"/></svg>`;
const tool = t => {
  if (!t) return '<span></span>';
  const n = t.replace(/[!+-]$/, ''), k = t.slice(n.length);
  return `<button aria-label="${n}" class="${k === '!' ? 'hi' : k === '-' ? 'dim' : ''}">${icon(n)}${k === '+' ? '<span class="caret"></span>' : ''}</button>`;
};
const tools = (list, cls = '') => `<div class="tools ${cls}">${list.split(' ').map(t => tool(t === '.' ? '' : t)).join('')}</div>`;
const sep = '<div class="vsep"></div>', gap = '<div class="gap-s"></div>';
const big = (svg, label, w, caret, cls = '') => `<button class="big ${cls}" style="width:${w}px"><span class="pic">${svg}</span><span>${label}</span>${caret ? '<span class="caret mt-1"></span>' : ''}</button>`;
const group = (cap, w, body) => `<section class="rgroup" style="width:${w}px"><div class="body d-flex">${body}</div><div class="cap">${cap}</div></section>`;
const lg = (n, s) => `<svg width="${s}" height="${s}"><use href="#i-${n}"/></svg>`;
const circle = '<svg width="20" height="20" viewBox="0 0 20 20"><circle cx="10" cy="10" r="8" fill="none" stroke="#4a98ae"/><use href="#pt" x="10" y="10"/></svg>';
const smart = '<svg width="24" height="22" viewBox="0 0 24 22"><path d="M2 8v13M22 8v13M3 13h18M6 10l-3 3 3 3M18 10l3 3-3 3" fill="none" stroke="#c4763a" stroke-width="1.200"/><path d="M2 21h20" stroke="#4a98ae"/><path d="M14 2l-6 7h4l-3 7 9-9h-5l3-5z" fill="#e6c928" stroke="#665515" stroke-width=".6"/></svg>';
const block = '<svg width="20" height="22" viewBox="0 0 20 22"><path d="M2 2h15v14H2z" fill="#e4e6e8" stroke="#777"/><circle cx="14" cy="16" r="4.500" fill="#fff" stroke="#444"/><path d="M14 13.500v5M11.500 16h5" stroke="#444"/><circle cx="3" cy="16" r="2" fill="#d0732f"/></svg>';
document.getElementById('ribbon').innerHTML =
  group('Select', 51, gap + gap + big(lg('arrow', 22), 'Select', 29, false, 'hi') + tools('fit tagbox .')) +
  group('Draw', 216, big(lg('line', 20), 'Line', 34, true) + big(circle, 'Circle by<br>Center&nbsp;Point <span class="caret d-inline-block align-middle"></span>', 49, false) + gap + gap +
    tools('rect+ fillet+ arc+ curve+ trim+ extend+ offset+ move+ mirror+', 'dd') + sep + gap + tools('sketch hatch cfgx cfg! . .') + gap + sep + gap + tools('grid1 grid2 xy snap angle gridp')) +
  group('Relate', 81, gap + gap + tools('con plus tan par eq sym conc perp col lock- rig- .') + sep + tools('rel1 rel2 rel3')) +
  group('IntelliSketch', 48, '<div class="mx-auto">' + tools('intel cross! pinbox-') + '</div>') +
  group('Dimension', 142, big(smart, 'Smart<br>Dimension', 43, false) + tools('dim angd coord+', 'dd') +
    tools('chain tbl chk dedit dcur dbrk dqr dmv dlay! dref xx dst') + gap + sep + gap + tools('aa box- .')) +
  group('Annotation', 103, gap + gap + tools('leada ball surf flag pm fcf datum dtgt edge') + tools('step textbox+ wave', 'dd') +
    tools('cl cm bolt') + sep + tools('list listh! .')) +
  group('Arrange', 40, gap + gap + tools('arr1- arr1- .') + sep + gap + gap + tools('arr2- arr2- .')) +
  group('Drawing Views', 57, gap + `<div class="tools views"><button>${icon('model')}2D Model</button><button>${icon('detail')}Detail</button></div>`) +
  group('Insert', 35, gap + tools('T img hand globe obj .')) +
  group('Blocks', 34, big(block, 'Block', 34, true));
document.getElementById('quick').innerHTML = '<span class="grip"></span>' +
  [['par', 'Parallel'], ['line', 'Line'], ['rect', 'Rectangle by Center'], ['textbox', 'Text'], ['undo', 'Undo'], ['sdim', 'Smart Dimension'], ['arrow', 'Select'], ['angd', 'Angle Between'], ['trim', 'Trim'], ['arcc', 'Arc by Center Point']]
  .map(([i, t]) => `<button class="${t === 'Select' ? 'on' : ''}">${icon(i)}${t}</button>`).join('');
document.getElementById('qat').innerHTML = ['new', '^', 'open', 'pin', 'save', 'saveas', '^', 'gear', 'props', '^', 'exit', 'undo', '^', 'redo', '^', 'repeat', 'caretw']
  .map(n => n === '^' ? '<span class="caret"></span>' : `<button aria-label="${n}">${icon(n)}</button>`).join('');
</script>
</body>
</html>
